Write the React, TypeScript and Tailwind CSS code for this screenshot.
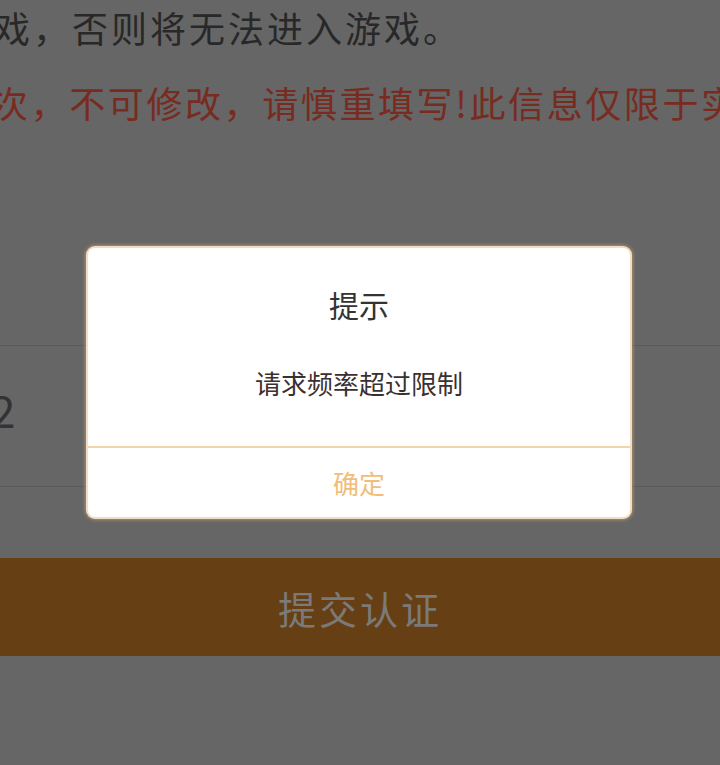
export default function App() {
  return (
    <div
      className="relative w-[720px] h-[765px] overflow-hidden bg-[#666666]"
      style={{ fontFamily: '"Noto Sans CJK SC", "Noto Sans", sans-serif' }}
    >
      {/* page behind the mask */}
      <p className="mt-[7px] ml-[-6px] whitespace-nowrap text-[36px] leading-[40px] tracking-[3px] text-[#282828]">
        戏，否则将无法进入游戏。
      </p>
      <p className="mt-[35px] ml-[-8px] whitespace-nowrap text-[36px] leading-[40px] tracking-[2.6px] text-[#782b1f]">
        次，不可修改，请慎重填写!此信息仅限于实名认证使用
      </p>

      <div className="mt-[223px] border-y border-[#5a5a5a] h-[142px] flex items-center">
        <span className="ml-[-9px] mt-[-14px] text-[44px] leading-none text-[#333333]">2</span>
      </div>

      <button className="mt-[71px] w-full h-[98px] bg-[#673f15] text-[38px] tracking-[3px] text-[#7b7a78]">
        提交认证
      </button>

      {/* dialog */}
      <div className="absolute left-[88px] top-[248px] w-[542px] h-[269px] flex flex-col rounded-[7px] bg-white shadow-[0_0_0_2px_#f3dcc0,0_0_4px_2px_#c8a47c]">
        <div className="mt-[36px] text-center text-[30px] leading-[40px] text-[#333333]">提示</div>
        <div className="mt-[41px] text-center text-[26px] leading-[36px] text-[#3b3030]">请求频率超过限制</div>
        <div className="mt-[45px] h-[2px] bg-[#f3d3a9]" />
        <button className="flex-1 text-[26px] text-[#f0bd7c]">确定</button>
      </div>
    </div>
  );
}
